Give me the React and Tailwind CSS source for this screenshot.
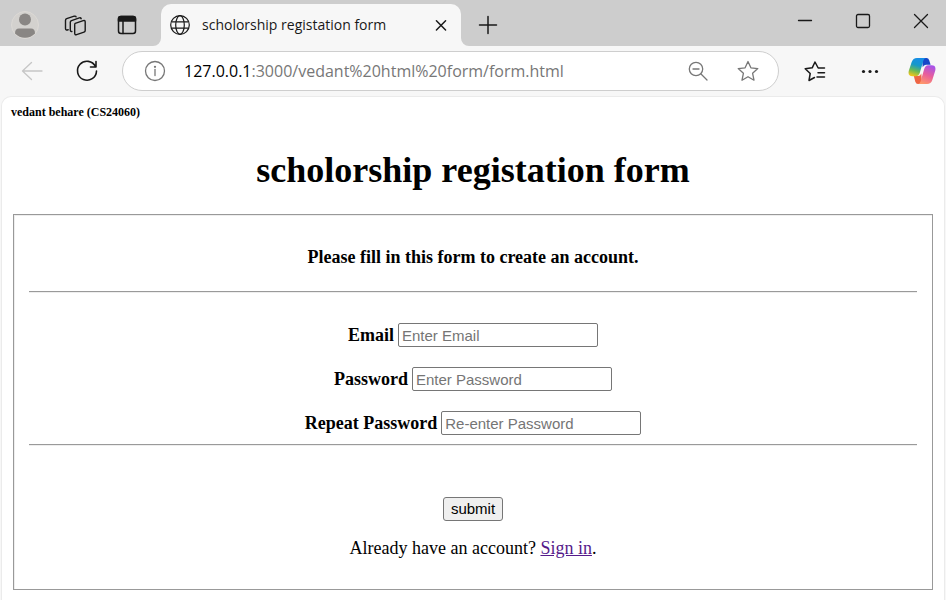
import React from "react";

function Icon({ children, className = "size-6", width = 1.3 }) {
  return (
    <svg viewBox="0 0 24 24" aria-hidden="true" fill="none" stroke="currentColor" strokeWidth={width} strokeLinecap="round" strokeLinejoin="round" className={className}>
      {children}
    </svg>
  );
}

function IconButton({ label, className, children }) {
  return (
    <button type="button" aria-label={label} className={`flex shrink-0 items-center justify-center ${className}`}>
      {children}
    </button>
  );
}

function TabBar() {
  return (
    <header className="flex h-[46px] bg-[#cdcdcd] text-[#191919]">
      <div className="flex w-[161px] shrink-0 items-center pt-1">
        <IconButton label="Profile" className="w-[50px]">
          <svg viewBox="0 0 28 28" className="size-7" aria-hidden="true">
            <circle cx="14" cy="14" r="13.5" fill="#d3d1ce" stroke="#dcd9d5" />
            <circle cx="14" cy="8.5" r="6" fill="#898684" />
            <path d="M4 22.500Q4 17.500 8 17.500H20Q24 17.500 24 22.500a14 14 0 0 1-20 0Z" fill="#898684" />
          </svg>
        </IconButton>
        <IconButton label="Workspaces" className="w-[50px]">
          <Icon width={1.4}>
            <path d="M12.200 10.300 20.200 7.600q2-.6 2 1.300v8.600q0 1.200-1.200 1.600l-7.400 2.500q-1.900.6-1.900-1.300v-8.500q0-1.200.5-1.500Z" />
            <path d="M8.900 18.500q-1.600.3-1.600-1.500V9.300q0-1.300 1.200-1.700l7.800-2.700q1.500-.4 1.900.8" />
            <path d="M5.200 16.800q-2.700.7-2.700-1.300V7.400q0-1.300 1.200-1.700l7.500-2.500q1.600-.4 1.900.7" />
          </Icon>
        </IconButton>
        <IconButton label="Tab actions" className="w-[54px]">
          <Icon width={1.5}>
            <rect x="3.500" y="3.500" width="17" height="17" rx="2.500" />
            <path d="M3.500 8V6q0-2.500 2.500-2.500h12q2.500 0 2.500 2.500v2Z" fill="currentColor" />
            <path d="M8 8v12.500" />
          </Icon>
        </IconButton>
      </div>
      <div className="relative mt-1 flex w-[300px] shrink-0 items-center rounded-t-[10px] bg-[#f7f7f7] pl-[9px]">
        <svg viewBox="0 0 8 8" aria-hidden="true" className="absolute right-full bottom-0 size-2"><path d="M8 0v8H0A8 8 0 0 0 8 0Z" fill="#f7f7f7" /></svg>
        <svg viewBox="0 0 8 8" aria-hidden="true" className="absolute bottom-0 left-full size-2"><path d="M0 0v8h8A8 8 0 0 1 0 0Z" fill="#f7f7f7" /></svg>
        <svg viewBox="0 0 20 20" aria-hidden="true" fill="none" stroke="currentColor" strokeWidth="1.2" className="size-5">
          <circle cx="10" cy="10" r="9.300" />
          <ellipse cx="10" cy="10" rx="4.300" ry="9.300" />
          <path d="M1.500 6.800h17M1.500 13.200h17" />
        </svg>
        <span className="ml-3 grow whitespace-nowrap text-[14px] leading-5">scholorship registation form</span>
        <IconButton label="Close tab" className="h-7 w-10">
          <Icon width={1.8} className="size-5"><path d="M6.500 7 17.500 18M17.500 7 6.500 18" /></Icon>
        </IconButton>
      </div>
      <IconButton label="New tab" className="w-[53px] pt-1">
        <Icon width={1.5}><path d="M12 3.500v17M3.500 12h17" /></Icon>
      </IconButton>
      <div className="ml-auto flex h-[41px]">
        <IconButton label="Minimize" className="w-[58px]">
          <Icon><path d="M5.500 11.500h13" /></Icon>
        </IconButton>
        <IconButton label="Maximize" className="w-[58px]">
          <Icon><rect x="5.500" y="5.500" width="13" height="13" rx="1.500" /></Icon>
        </IconButton>
        <IconButton label="Close window" className="w-[54px] pl-1">
          <Icon><path d="m5.500 5.500 13 13m0-13-13 13" /></Icon>
        </IconButton>
      </div>
    </header>
  );
}

function CopilotLogo() {
  return (
    <svg viewBox="0 0 28 28" className="size-7" aria-hidden="true">
      <defs>
        <linearGradient id="cool" x1="0.600" y1="0" x2="0.300" y2="1">
          <stop offset="0" stopColor="#168de8" />
          <stop offset=".4" stopColor="#1698c9" />
          <stop offset=".7" stopColor="#67b957" />
          <stop offset="1" stopColor="#f0c51a" />
        </linearGradient>
        <linearGradient id="warm" x1="0.700" y1="0" x2="0.300" y2="1">
          <stop offset="0" stopColor="#a653ea" />
          <stop offset=".5" stopColor="#e95e9b" />
          <stop offset="1" stopColor="#ff986a" />
        </linearGradient>
      </defs>
      <path d="M14 1h4.500q2 0 2.700 2.200l1.400 4.600H18q-2.500 0-3.300 2.500Z" fill="#1647c8" />
      <path d="M14 27H10q-2 0-2.700-2.200L5.800 19H10q2.500 0 3.300-2.500Z" fill="#ee6545" />
      <path d="M9 1H18q-2 .3-2.600 2.500L11.800 15.800q-1 3.400-4 3.400H4.500q-5 0-3.700-5.500L3.600 5.300Q5 1 9 1Z" fill="url(#cool)" />
      <path d="M19 27H10q2-.3 2.600-2.500L16.200 12q1-3.800 4-3.800H23.500q5 0 3.700 5.500L24.400 22.700Q23 27 19 27Z" fill="url(#warm)" />
    </svg>
  );
}

function Toolbar() {
  return (
    <nav aria-label="Browser toolbar" className="flex h-[50px] items-center bg-[#f7f7f7] text-[#191919]">
      <IconButton label="Back" className="ml-1 w-14 text-[#c6c6c6]">
        <Icon><path d="M22 12H2.500M11.500 3.500 2.500 12l9 8.500" /></Icon>
      </IconButton>
      <IconButton label="Reload" className="w-[54px]">
        <Icon width={1.6}><path d="M20.500 7.500A9.500 9.500 0 1 0 21.500 12M21 2.500V8h-5.500" /></Icon>
      </IconButton>
      <div className="ml-2 flex h-10 min-w-0 grow items-center rounded-full border border-[#cecece] bg-white pl-5 text-[#777]">
        <IconButton label="Site information" className="w-6">
          <Icon><circle cx="12" cy="12" r="9.500" /><path d="M12 10.500v6" /><circle cx="12" cy="7.800" r=".5" fill="currentColor" /></Icon>
        </IconButton>
        <div className="ml-[17px] grow whitespace-nowrap text-[16px] leading-6"><span className="text-black">127.0.0.1</span>:3000/vedant%20html%20form/form.html</div>
        <IconButton label="Zoom out" className="w-[50px]">
          <Icon><circle cx="10" cy="10" r="6.700" /><path d="m15 15 6 6M7 10h6" /></Icon>
        </IconButton>
        <IconButton label="Add to favorites" className="mr-[5px] w-[50px]">
          <Icon><path d="m12 2.500 2.900 6.300 6.900.8-5.200 4.700 1.400 6.900-6-3.500-6 3.500 1.400-6.900-5.200-4.700 6.900-.8Z" /></Icon>
        </IconButton>
      </div>
      <IconButton label="Favorites" className="ml-2 w-[56px]">
        <Icon width={1.5}><path d="M21.500 9H15.200L12 3 9.200 8.800l-7 .9 5 4.800L6 21.500l5.500-3M15 13.800h6.500M14 18h7.500" /></Icon>
      </IconButton>
      <IconButton label="Settings and more" className="w-[54px]">
        <Icon><g fill="currentColor" stroke="none"><circle cx="5.500" cy="12.500" r="1.600" /><circle cx="12" cy="12.500" r="1.600" /><circle cx="18.500" cy="12.500" r="1.600" /></g></Icon>
      </IconButton>
      <IconButton label="Copilot" className="w-[49px]"><CopilotLogo /></IconButton>
    </nav>
  );
}

function Field({ id, label, type, placeholder }) {
  return (
    <div className="flex items-center justify-center gap-1">
      <label htmlFor={id} className="font-bold">{label}</label>
      <input id={id} type={type} placeholder={placeholder} className="h-6 w-[200px] rounded-[2px] border border-[#767676] bg-white px-[3px] font-['Liberation_Sans',Arial,sans-serif] text-[15px] placeholder:text-[#757575]" />
    </div>
  );
}

const rule = "border-t border-b border-t-[#9a9a9a] border-b-[#eeeeee]";

export default function App() {
  return (
    <div className="flex min-h-screen flex-col bg-[#f7f7f7] font-['Open_Sans','Noto_Sans',sans-serif]">
      <TabBar />
      <Toolbar />
      <main className="mx-px grow rounded-t-[10px] border border-b-0 border-[#ebebeb] bg-white px-[9px] pt-[5px] pb-2 font-['Liberation_Serif','Times_New_Roman',serif] text-[18px] leading-5 text-black">
        <h6 className="text-[12px] leading-5 font-bold">vedant behare (CS24060)</h6>
        <h1 className="mt-7 text-center text-[36px] leading-10 font-bold">scholorship registation form</h1>
        <form onSubmit={(event) => event.preventDefault()} className="mx-0.5 mt-6 border border-[#999] px-[15px] pt-8 pb-[31px] shadow-[inset_1px_1px_0_#eeeeee]">
          <p className="text-center font-bold">Please fill in this form to create an account.</p>
          <hr className={`mt-6 mb-[30px] ${rule}`} />
          <div className="flex flex-col gap-5">
            <Field id="email" label="Email" type="email" placeholder="Enter Email" />
            <Field id="password" label="Password" type="password" placeholder="Enter Password" />
            <Field id="repeat" label="Repeat Password" type="password" placeholder="Re-enter Password" />
          </div>
          <hr className={`mt-[9px] ${rule}`} />
          <div className="mt-[51px] flex justify-center">
            <button type="submit" className="h-6 rounded-[3px] border border-[#767676] bg-[#efefef] px-[7px] font-['Liberation_Sans',Arial,sans-serif] text-[15px] leading-5">submit</button>
          </div>
          <p className="mt-[17px] text-center">Already have an account? <a href="#signin" className="text-[#551a8b] underline">Sign in</a>.</p>
        </form>
      </main>
    </div>
  );
}
